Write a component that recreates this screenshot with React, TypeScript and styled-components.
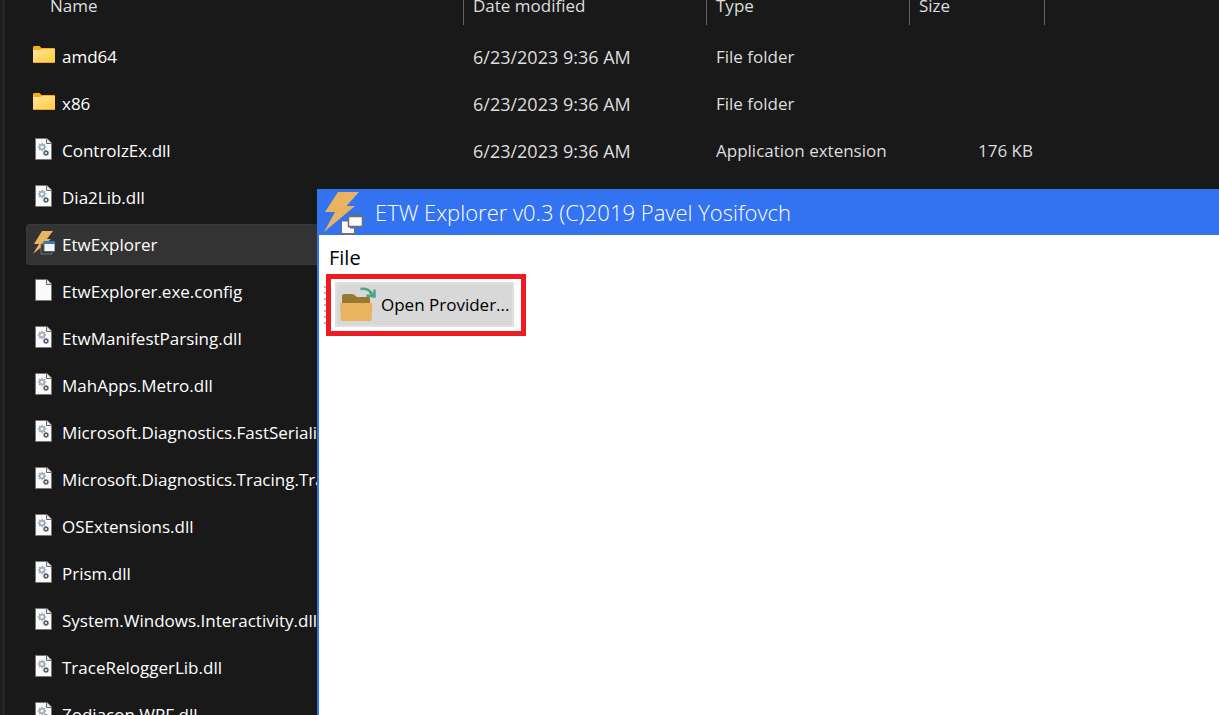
import React from "react";
import styled, { createGlobalStyle } from "styled-components";

const GlobalStyle = createGlobalStyle`
  * { box-sizing: border-box; }
  body {
    margin: 0;
    background: #191919;
    font-family: "Open Sans", "Noto Sans", sans-serif;
    font-size: 17px;
  }
`;

const Desktop = styled.div`
  position: relative;
  display: flex;
  height: 100vh;
  overflow: hidden;
  background: #191919;
`;

const PaneSplitter = styled.div`
  flex: none;
  width: 5px;
  background: #202020;
  border-left: 1px solid #191919;
  border-right: 2px solid #262626;
`;

const ListPane = styled.main`
  flex: 1;
  min-width: 0;
  padding-left: 21px;
`;

const FileTable = styled.table`
  width: 100%;
  table-layout: fixed;
  border-collapse: separate;
  border-spacing: 0;
`;

const Column = styled.col<{ $width?: number }>`
  width: ${(p) => (p.$width ? `${p.$width}px` : "auto")};
`;

const HeadCell = styled.th<{ $first?: boolean }>`
  height: 25px;
  padding: 0 0 13px ${(p) => (p.$first ? 24 : 9)}px;
  border-left: ${(p) => (p.$first ? "0" : "1px solid #636363")};
  color: #dedede;
  font-weight: 400;
  line-height: 12px;
  text-align: left;
  white-space: nowrap;
`;

const Cell = styled.td<{ $right?: boolean }>`
  height: 47px;
  padding: 0 ${(p) => (p.$right ? 11 : 0)}px 0 10px;
  color: #dedede;
  text-align: ${(p) => (p.$right ? "right" : "left")};
  white-space: nowrap;
  vertical-align: middle;
`;

const DateCell = styled(Cell)`
  font-size: 18px;
`;

const NameCell = styled.td`
  height: 47px;
  padding: 0 0 1px;
  vertical-align: middle;
`;

const NameBox = styled.div<{ $selected?: boolean }>`
  display: flex;
  align-items: center;
  gap: 7px;
  height: 41px;
  padding-left: 6px;
  border: 1px solid ${(p) => (p.$selected ? "#383838" : "transparent")};
  border-radius: 3px 0 0 3px;
  background: ${(p) => (p.$selected ? "#333333" : "transparent")};
  color: #ffffff;
  white-space: nowrap;

  svg { flex: none; margin-bottom: 2px; }
`;

const TableBody = styled.tbody`
  &::before {
    content: "";
    display: table-row;
    height: 8px;
  }
`;

const AppWindow = styled.section`
  position: absolute;
  top: 189px;
  left: 317px;
  right: 0;
  bottom: 0;
  display: flex;
  flex-direction: column;
  border-left: 2px solid #3373f2;
  background: #ffffff;
  color: #000000;
`;

const TitleBar = styled.header`
  display: flex;
  align-items: center;
  gap: 11px;
  height: 46px;
  padding-left: 4px;
  background: #3373f2;
  color: #ffffff;

  svg { flex: none; }
`;

const Title = styled.h1`
  margin: 0;
  font-size: 22px;
  font-weight: 300;
  line-height: 30px;
  white-space: nowrap;
`;

const MenuBar = styled.nav`
  display: flex;
  height: 39px;
  padding: 4px 4px 0;
`;

const MenuButton = styled.button`
  height: 36px;
  padding: 0 6px;
  border: 0;
  background: transparent;
  color: inherit;
  font: inherit;
  font-size: 20px;
`;

const ToolBar = styled.div`
  display: flex;
  align-items: center;
  padding-left: 5px;
`;

const Grip = styled.span`
  width: 2px;
  height: 38px;
  background: repeating-linear-gradient(#b9b9b9 0 2px, transparent 2px 6px);
`;

const Highlight = styled.div`
  padding: 3px 7px 4px 4px;
  border: 5px solid #ed1c24;
`;

const ToolButton = styled.button`
  display: flex;
  align-items: center;
  gap: 5px;
  height: 45px;
  padding: 0 2px 0 3px;
  border: 2px solid #e0e0e0;
  background: #d8d8d8;
  color: inherit;
  font: inherit;
  white-space: nowrap;

  svg { flex: none; }
`;

const FolderIcon = () => (
  <svg width="22" height="24" viewBox="0 0 22 24" aria-hidden="true">
    <defs>
      <linearGradient id="folder" x1="0" y1="0" x2="1" y2="1">
        <stop offset="0" stopColor="#ffe59d" />
        <stop offset="1" stopColor="#ffcb3d" />
      </linearGradient>
    </defs>
    <path d="M0 4.5Q0 3 1 3H6.5L8.500 5H21Q22 5 22 6V19H0Z" fill="#f8ad13" />
    <path d="M0 7H7.5L9 6H22V19H0Z" fill="url(#folder)" />
    <path d="M0 19.5H22" stroke="#e9a827" />
  </svg>
);

const GEAR_TEETH = [0, 45, 90, 135];

const Gear = ({ x, y, r, color }: { x: number; y: number; r: number; color: string }) => (
  <g transform={`translate(${x} ${y})`} stroke={color} fill="none">
    <circle r={r * 0.62} strokeWidth={r * 0.45} />
    {GEAR_TEETH.map((a) => (
      <g key={a} transform={`rotate(${a})`} strokeWidth={r * 0.4}>
        <path d={`M${r * 0.7} 0H${r * 1.1}M${-r * 0.7} 0H${-r * 1.1}`} />
      </g>
    ))}
  </g>
);

const PageIcon = ({ gears }: { gears?: boolean }) => (
  <svg width="22" height="24" viewBox="0 0 22 24" aria-hidden="true">
    <path d="M2.5 1.5H14L18.5 6V22.5H2.5Z" fill="#fafafa" stroke="#777777" />
    <path d="M13.5 1.5V6.5H18.5" fill="#e8e8e8" stroke="#666666" />
    <path d="M15 0H20V5Z" fill="#191919" />
    {gears && (
      <>
        <Gear x={9} y={10} r={3.8} color="#a3afbc" />
        <Gear x={13} y={16} r={2.8} color="#505a66" />
      </>
    )}
  </svg>
);

const BoltIcon = () => (
  <svg width="22" height="24" viewBox="0 0 22 24" aria-hidden="true">
    <path d="M9 0H20L14 8H18L0 23L6 13H1Z" fill="#e8b462" />
    <path d="M8 13V23H19V20H11V13Z" fill="#333333" stroke="#73777d" />
    <path d="M11 10.5H22V20.5H11Z" fill="#f4f5f7" stroke="#53606f" />
    <path d="M10.5 10H22V13H10.5Z" fill="#3978b6" />
  </svg>
);

const WindowBoltIcon = () => (
  <svg width="41" height="46" viewBox="0 0 41 46" aria-hidden="true">
    <path d="M15 3H36L23.5 17H32L1 43L12 23H2Z" fill="#e8b462" />
    <path d="M18.5 32H27V39H31.5V44.5H18.5Z" fill="#fafafa" stroke="#6b6f78" />
    <path d="M18 44H32V46H18Z" fill="#6b6f78" />
    <path d="M25 24H40V28H25Z" fill="#3c77b8" />
    <path d="M25.5 27.5H39.5V37.5H25.5Z" fill="#fafafa" stroke="#6b6f78" strokeWidth="1.5" />
  </svg>
);

const OpenFolderIcon = () => (
  <svg width="36" height="38" viewBox="0 0 36 38" aria-hidden="true">
    <path d="M2 20V10Q2 8 4 8H12Q14 8 17 11H29Q30 11 30 13V20Z" fill="#967a2e" />
    <path d="M0 17H32.5L31.5 34Q31.5 35 30 35H3Q1 35 1 34Z" fill="#e8b462" />
    <path d="M20.5 3Q29 2 31.5 8" fill="none" stroke="#4ea583" strokeWidth="2.5" />
    <path d="M34.500 3.5V10.500L26.5 9.5" fill="none" stroke="#4ea583" strokeWidth="2.5" />
    <path d="M30 6L34 10" stroke="#4ea583" strokeWidth="3" />
  </svg>
);

type Kind = "folder" | "dll" | "app" | "file";

interface Entry {
  name: string;
  kind: Kind;
  date?: string;
  type?: string;
  size?: string;
}

const ENTRIES: Entry[] = [
  { name: "amd64", kind: "folder", date: "6/23/2023 9:36 AM", type: "File folder" },
  { name: "x86", kind: "folder", date: "6/23/2023 9:36 AM", type: "File folder" },
  { name: "ControlzEx.dll", kind: "dll", date: "6/23/2023 9:36 AM", type: "Application extension", size: "176 KB" },
  { name: "Dia2Lib.dll", kind: "dll" },
  { name: "EtwExplorer", kind: "app" },
  { name: "EtwExplorer.exe.config", kind: "file" },
  { name: "EtwManifestParsing.dll", kind: "dll" },
  { name: "MahApps.Metro.dll", kind: "dll" },
  { name: "Microsoft.Diagnostics.FastSerializ", kind: "dll" },
  { name: "Microsoft.Diagnostics.Tracing.Tra", kind: "dll" },
  { name: "OSExtensions.dll", kind: "dll" },
  { name: "Prism.dll", kind: "dll" },
  { name: "System.Windows.Interactivity.dll", kind: "dll" },
  { name: "TraceReloggerLib.dll", kind: "dll" },
  { name: "Zodiacon.WPF.dll", kind: "dll" },
];

const EntryIcon = ({ kind }: { kind: Kind }) => {
  if (kind === "folder") return <FolderIcon />;
  if (kind === "app") return <BoltIcon />;
  return <PageIcon gears={kind === "dll"} />;
};

export default function App() {
  return (
    <Desktop>
      <GlobalStyle />
      <PaneSplitter />
      <ListPane>
        <FileTable>
          <colgroup>
            <Column $width={437} />
            <Column $width={243} />
            <Column $width={203} />
            <Column $width={135} />
            <Column />
          </colgroup>
          <thead>
            <tr>
              <HeadCell $first scope="col">Name</HeadCell>
              <HeadCell scope="col">Date modified</HeadCell>
              <HeadCell scope="col">Type</HeadCell>
              <HeadCell scope="col">Size</HeadCell>
              <HeadCell as="td" />
            </tr>
          </thead>
          <TableBody>
            {ENTRIES.map((e) => (
              <tr key={e.name}>
                <NameCell>
                  <NameBox $selected={e.kind === "app"}>
                    <EntryIcon kind={e.kind} />
                    {e.name}
                  </NameBox>
                </NameCell>
                <DateCell>{e.date}</DateCell>
                <Cell>{e.type}</Cell>
                <Cell $right>{e.size}</Cell>
                <Cell />
              </tr>
            ))}
          </TableBody>
        </FileTable>
      </ListPane>

      <AppWindow>
        <TitleBar>
          <WindowBoltIcon />
          <Title>ETW Explorer v0.3 (C)2019 Pavel Yosifovch</Title>
        </TitleBar>
        <MenuBar>
          <MenuButton type="button">File</MenuButton>
        </MenuBar>
        <ToolBar>
          <Grip />
          <Highlight>
            <ToolButton type="button">
              <OpenFolderIcon />
              Open Provider...
            </ToolButton>
          </Highlight>
        </ToolBar>
      </AppWindow>
    </Desktop>
  );
}
